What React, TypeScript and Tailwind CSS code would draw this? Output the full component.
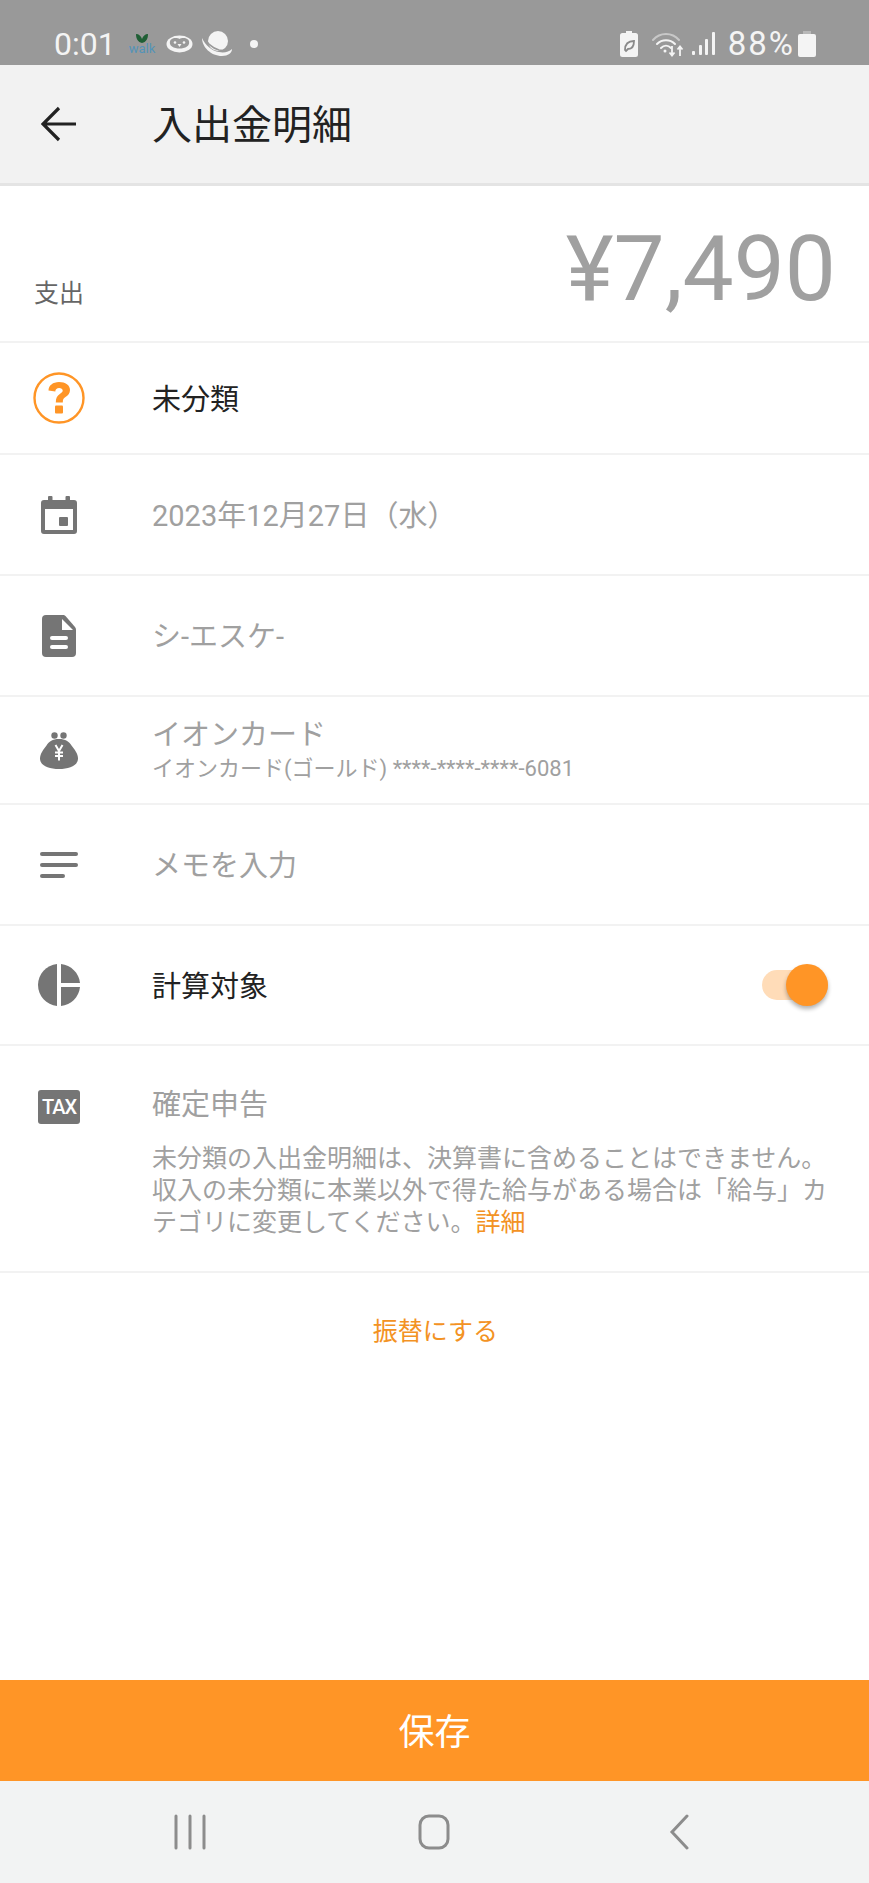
import React from 'react';

const FONT = "font-['Roboto','Noto_Sans_CJK_JP',sans-serif]";

function WalkIcon() {
  return (
    <div className="flex w-[28px] flex-col items-center">
      <svg width="14" height="10" viewBox="0 0 14 10">
        <path d="M7 10C3 9 1 6 1 1c3 0 5 2 6 5 1-3 3-5 6-5 0 5-2 8-6 9z" fill="#1f5f35" />
      </svg>
      <span className="text-[13px] leading-[12px] text-[#5493b8]">walk</span>
    </div>
  );
}

function PenguinIcon() {
  return (
    <svg width="27" height="18" viewBox="0 0 27 18">
      <ellipse cx="13.500" cy="9" rx="13" ry="8.500" fill="#f4f4f4" />
      <path d="M13.500 4c2-1.500 7-1.600 9 1 1.300 2 .8 5-1.500 6.500-2 1.500-5 2-7.500 2s-5.500-.5-7.500-2C3.700 10 3.200 7 4.500 5c2-2.600 7-2.500 9-1z" fill="#999999" />
      <circle cx="9" cy="7.500" r="1.300" fill="#f4f4f4" />
      <circle cx="18" cy="7.500" r="1.300" fill="#f4f4f4" />
      <path d="M11.500 9h4L13.500 12z" fill="#f4f4f4" />
    </svg>
  );
}

function PlanetIcon() {
  return (
    <svg width="32" height="26" viewBox="0 0 32 26">
      <circle cx="17" cy="10" r="10" fill="#f4f4f4" />
      <path d="M1 7c0 9 9 18 20 18 6 0 10-3 10-7-3 3-8 4-13 3C11 20 4 14 1 7z" fill="#f4f4f4" />
      <path d="M2 4c2 7 9 13 16 15 5 1 10 0 13-3" fill="none" stroke="#999999" strokeWidth="1.600" />
    </svg>
  );
}

function BatteryLeafIcon() {
  return (
    <svg width="18" height="26" viewBox="0 0 18 26">
      <path d="M6 0h6v2h3.500A2.500 2.500 0 0 1 18 4.500v19a2.500 2.500 0 0 1-2.500 2.500h-13A2.500 2.500 0 0 1 0 23.500v-19A2.500 2.500 0 0 1 2.500 2H6z" fill="#f4f4f4" />
      <path d="M5 19c0-6 3-9 9-9 0 6-3 8-6 8l-2 2z" fill="none" stroke="#8a8a8a" strokeWidth="1.800" />
    </svg>
  );
}

function WifiIcon() {
  return (
    <svg width="32" height="26" viewBox="0 0 32 26" fill="none">
      <path d="M1 9C8 1 20 1 27 9" stroke="#c8c8c8" strokeWidth="2" strokeLinecap="round" />
      <path d="M5 13c5-5 13-5 18 0" stroke="#f4f4f4" strokeWidth="2" strokeLinecap="round" />
      <path d="M9 17c3-3 7-3 10 0" stroke="#f4f4f4" strokeWidth="2" strokeLinecap="round" />
      <circle cx="13" cy="20" r="1.500" fill="#f4f4f4" />
      <path d="M20 15v9m-2.500-2.500 2.500 3 2.500-3" stroke="#f4f4f4" strokeWidth="1.800" />
      <path d="M28 25v-9m-2.500 2.500 2.500-3 2.500 3" stroke="#f4f4f4" strokeWidth="1.800" />
    </svg>
  );
}

function SignalIcon() {
  return (
    <svg width="23" height="26" viewBox="0 0 23 26" fill="#f4f4f4">
      <rect x="0" y="20" width="3" height="4" rx="1" />
      <rect x="7" y="14" width="3" height="10" rx="1" />
      <rect x="13" y="8" width="3" height="16" rx="1" />
      <rect x="20" y="1" width="3" height="23" rx="1" />
    </svg>
  );
}

function BatteryIcon() {
  return (
    <svg width="18" height="26" viewBox="0 0 18 26">
      <path d="M5 0h8v3H5z" fill="#b8b8b8" />
      <rect x="0" y="3" width="18" height="23" rx="2" fill="#f4f4f4" />
    </svg>
  );
}

function StatusBar() {
  return (
    <div className="flex h-[65px] items-center justify-between bg-[#999999] pt-[22px] pr-[53px] pl-[54px]">
      <div className="flex items-center">
        <span className="w-[74px] text-[32px] leading-[40px] text-[#f4f4f4]">0:01</span>
        <WalkIcon />
        <div className="ml-[10px]"><PenguinIcon /></div>
        <div className="ml-[8px]"><PlanetIcon /></div>
        <div className="ml-[17px] h-[8px] w-[8px] rounded-full bg-[#f4f4f4]" />
      </div>
      <div className="flex items-center">
        <BatteryLeafIcon />
        <div className="ml-[14px]"><WifiIcon /></div>
        <div className="ml-[8px]"><SignalIcon /></div>
        <span className="ml-[13px] text-[33px] leading-[40px] tracking-[2px] text-[#f4f4f4]">88%</span>
        <div className="ml-[3px]"><BatteryIcon /></div>
      </div>
    </div>
  );
}

function Header() {
  return (
    <div className="flex h-[121px] items-center border-b-[3px] border-[#e4e4e4] bg-[#f2f2f2]">
      <div className="flex w-[152px] justify-center pr-[35px]">
        <svg width="36" height="36" viewBox="0 0 36 36" fill="none" stroke="#222222" strokeWidth="3.200">
          <path d="M1.500 18H35M18 2 2 18l16 16" />
        </svg>
      </div>
      <h1 className="pt-[4px] text-[40px] leading-[56px] font-normal text-[#222222]">入出金明細</h1>
    </div>
  );
}

function Row({ icon, h, children }: { icon: React.ReactNode; h: string; children: React.ReactNode }) {
  return (
    <div className={`flex items-center border-b-2 border-[#f2f2f2] ${h}`}>
      <div className="flex w-[118px] shrink-0 justify-center">{icon}</div>
      <div className="min-w-0 flex-1 pl-[34px]">{children}</div>
    </div>
  );
}

const ICON_GRAY = '#757575';

function QuestionIcon() {
  return (
    <svg width="52" height="52" viewBox="0 0 52 52">
      <circle cx="26" cy="26" r="24.500" fill="none" stroke="#ff9526" strokeWidth="2.400" />
      <path d="M15.500 18.500c0-5 4.500-8.500 10.500-8.500 6.500 0 11 3.200 11 8 0 3.500-2 5.400-4.500 7-2 1.300-2.700 2.300-2.700 5.500h-7c0-4.500 1.300-6.800 4-8.600 1.900-1.200 2.900-2 2.900-3.300 0-1.600-1.500-2.500-3.600-2.500-2.200 0-3.700 1.300-3.800 3.400z" fill="#ff9526" />
      <rect x="22" y="33.500" width="8" height="8" rx="1" fill="#ff9526" />
    </svg>
  );
}

function CalendarIcon() {
  return (
    <svg width="36" height="38" viewBox="0 0 36 38">
      <path d="M8 0h2.500a1 1 0 0 1 1 1v3h13V1a1 1 0 0 1 1-1H28a1 1 0 0 1 1 1v3h4a3 3 0 0 1 3 3v28a3 3 0 0 1-3 3H3a3 3 0 0 1-3-3V7a3 3 0 0 1 3-3h4V1a1 1 0 0 1 1-1z" fill={ICON_GRAY} />
      <rect x="4" y="13" width="28" height="21" fill="#ffffff" />
      <rect x="18" y="21" width="9" height="9" rx="1" fill={ICON_GRAY} />
    </svg>
  );
}

function DocIcon() {
  return (
    <svg width="34" height="42" viewBox="0 0 34 42">
      <path d="M4 0h17c1 0 2 .5 2.500 1L33 12c.6.700 1 1.500 1 2.500V38a4 4 0 0 1-4 4H4a4 4 0 0 1-4-4V4a4 4 0 0 1 4-4z" fill={ICON_GRAY} />
      <path d="M20 4v11h11z" fill="#ffffff" />
      <rect x="8" y="21" width="18" height="4" rx="2" fill="#ffffff" />
      <rect x="8" y="30" width="18" height="4" rx="2" fill="#ffffff" />
    </svg>
  );
}

function PurseIcon() {
  return (
    <svg width="38" height="37" viewBox="0 0 38 37">
      <circle cx="14.500" cy="3.500" r="3.200" fill={ICON_GRAY} />
      <circle cx="23.500" cy="3.500" r="3.200" fill={ICON_GRAY} />
      <path d="M19 7c6.500 0 10 2.500 12.500 6.500C34.500 17.500 38 21.500 38 26.500 38 33.500 29.500 37 19 37S0 33.500 0 26.500c0-5 3.500-9 6.500-13C9 9.500 12.500 7 19 7z" fill={ICON_GRAY} />
      <path d="M15.500 13l3.500 6 3.500-6M19 19v9.500M15 20.500h8M15 24h8" fill="none" stroke="#ffffff" strokeWidth="2" />
    </svg>
  );
}

function LinesIcon() {
  return (
    <svg width="38" height="26" viewBox="0 0 38 26" fill={ICON_GRAY}>
      <rect x="0" y="0" width="38" height="4" rx="2" />
      <rect x="0" y="11" width="38" height="4" rx="2" />
      <rect x="0" y="22" width="25" height="4" rx="2" />
    </svg>
  );
}

function PieIcon() {
  return (
    <svg width="42" height="42" viewBox="0 0 42 42" fill={ICON_GRAY}>
      <path d="M19 0v42C8.500 41 0 32 0 21S8.500 1 19 0z" />
      <path d="M23 0c10 1 18 9 19 19H23z" />
      <path d="M23 23h19c-1 10-9 18-19 19z" />
    </svg>
  );
}

function TaxIcon() {
  return (
    <div className="flex h-[34px] w-[42px] items-center justify-center rounded-[3px] bg-[#757575] text-[20px] leading-none font-medium tracking-[-1px] text-white">
      TAX
    </div>
  );
}

function NavBar() {
  return (
    <div className="flex h-[102px] items-center bg-[#f2f3f3]">
      <div className="flex w-[380px] justify-center">
        <svg width="34" height="36" viewBox="0 0 34 36" stroke="#8c8c8c" strokeWidth="3" strokeLinecap="round">
          <path d="M3 2v32M17 2v32M31 2v32" />
        </svg>
      </div>
      <div className="flex w-[108px] justify-center">
        <svg width="32" height="36" viewBox="0 0 32 36" fill="none" stroke="#8c8c8c" strokeWidth="3">
          <rect x="2" y="2" width="28" height="32" rx="9" />
        </svg>
      </div>
      <div className="flex w-[381px] justify-center">
        <svg width="20" height="36" viewBox="0 0 20 36" fill="none" stroke="#8c8c8c" strokeWidth="3" strokeLinecap="round">
          <path d="M18 2 3 18l15 16" />
        </svg>
      </div>
    </div>
  );
}

export default function App() {
  return (
    <div className={`flex h-[1883px] w-[869px] flex-col overflow-hidden bg-white ${FONT}`}>
      <StatusBar />
      <Header />

      <div className="flex h-[157px] items-end justify-between border-b-2 border-[#f2f2f2] pr-[33px] pb-[18px] pl-[34px]">
        <span className="pb-[12px] text-[25px] leading-[34px] text-[#666666]">支出</span>
        <span className="text-[91px] leading-[107px] text-[#a0a0a0]">¥7,490</span>
      </div>

      <Row icon={<QuestionIcon />} h="h-[112px]">
        <p className="pt-[5px] text-[29px] text-[#222222]">未分類</p>
      </Row>
      <Row icon={<CalendarIcon />} h="h-[121px]">
        <p className="pt-[5px] text-[29px] text-[#a0a0a0]">2023年12月27日（水）</p>
      </Row>
      <Row icon={<DocIcon />} h="h-[121px]">
        <p className="pt-[5px] text-[29px] text-[#a0a0a0]">シ-エスケ-</p>
      </Row>
      <Row icon={<PurseIcon />} h="h-[108px]">
        <p className="text-[29px] leading-[36px] text-[#a0a0a0]">イオンカード</p>
        <p className="pt-[2px] text-[22px] leading-[28px] text-[#a0a0a0]">イオンカード(ゴールド) ****-****-****-6081</p>
      </Row>
      <Row icon={<LinesIcon />} h="h-[121px]">
        <p className="pt-[5px] text-[29px] text-[#a0a0a0]">メモを入力</p>
      </Row>
      <Row icon={<PieIcon />} h="h-[120px]">
        <div className="flex items-center justify-between pr-[41px]">
          <p className="pt-[6px] text-[29px] text-[#222222]">計算対象</p>
          <div className="flex h-[30px] w-[66px] items-center justify-end rounded-full bg-[#ffdcb8]">
            <div className="h-[42px] w-[42px] rounded-full bg-[#ff9526] shadow-[0_3px_4px_rgba(0,0,0,0.3)]" />
          </div>
        </div>
      </Row>

      <div className="flex h-[227px] border-b-2 border-[#f2f2f2] pt-[39px]">
        <div className="flex w-[118px] shrink-0 justify-center pt-[5px]"><TaxIcon /></div>
        <div className="min-w-0 flex-1 pl-[34px]">
          <p className="text-[29px] leading-[40px] text-[#a0a0a0]">確定申告</p>
          <p className="mt-[18px] text-[25px] leading-[32px] text-[#a0a0a0]">
            未分類の入出金明細は、決算書に含めることはできません。
            <br />
            収入の未分類に本業以外で得た給与がある場合は「給与」カ
            <br />
            テゴリに変更してください。<span className="text-[#f39223]">詳細</span>
          </p>
        </div>
      </div>

      <div className="flex h-[106px] items-center justify-center pt-[12px] pl-[2px] text-[25px] text-[#f39223]">振替にする</div>

      <div className="flex-1" />

      <div className="flex h-[101px] items-center justify-center bg-[#ff9526] pt-[4px] text-[36px] text-white">保存</div>
      <NavBar />
    </div>
  );
}
